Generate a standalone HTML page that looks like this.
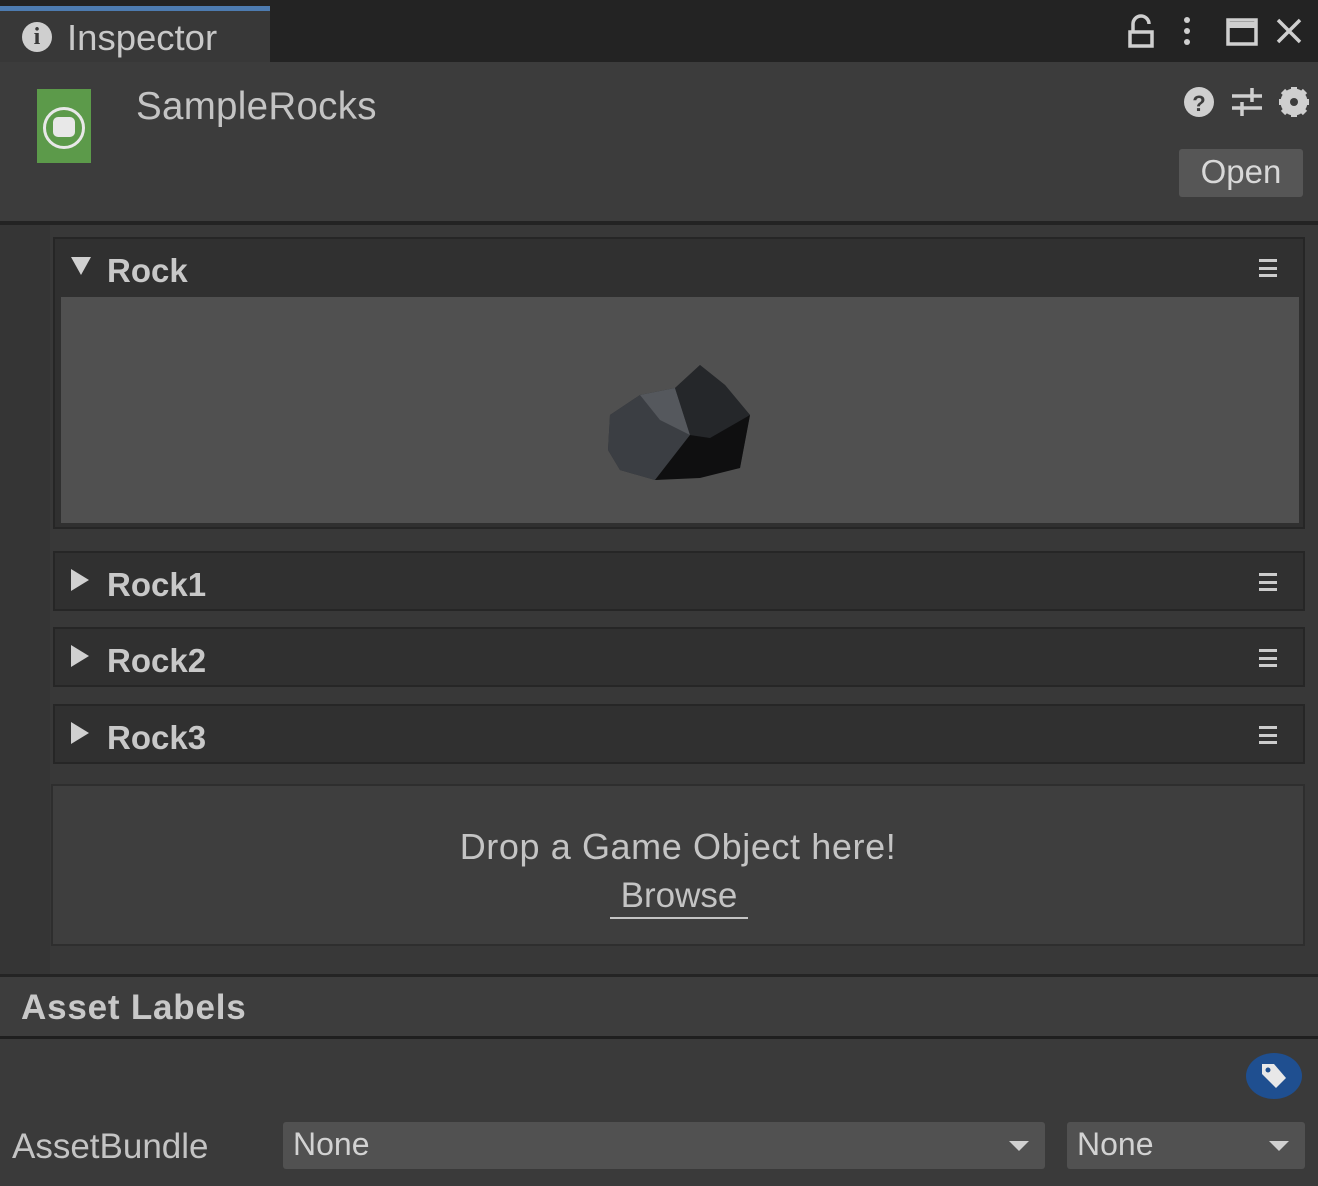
<!DOCTYPE html>
<html><head><meta charset="utf-8"><style>
*{margin:0;padding:0;box-sizing:border-box}
body{width:1318px;height:1186px;background:#383838;font-family:"Liberation Sans",sans-serif;color:#c4c4c4;position:relative;overflow:hidden}
.a{position:absolute}
.hdr{position:absolute;left:53px;width:1252px;height:60px;background:#303030;border:2px solid #262626}
.hdr .t{position:absolute;left:52px;top:13px;font-size:33px;font-weight:bold;color:#c8c8c8}
.tri{position:absolute;left:16px;top:16px;width:0;height:0;border-top:11px solid transparent;border-bottom:11px solid transparent;border-left:18px solid #d0d0d0}
.menu{position:absolute;right:26px;top:20px;width:18px;height:18px;border-top:3px solid #ccc;border-bottom:3px solid #ccc}
.menu:after{content:"";position:absolute;left:0;right:0;top:5px;height:3px;background:#ccc}
.dd{position:absolute;top:1122px;height:47px;background:#515151;border-radius:3px;font-size:32px;color:#d2d2d2;padding:4px 10px}
.dd:after{content:"";position:absolute;right:16px;top:19px;border-left:10px solid transparent;border-right:10px solid transparent;border-top:10px solid #d0d0d0}
</style></head><body>
<div class="a" style="left:0;top:0;width:1318px;height:62px;background:#232323"></div>
<div class="a" style="left:0;top:6px;width:270px;height:57px;background:#383838"></div>
<div class="a" style="left:0;top:6px;width:270px;height:5px;background:#4d7bb0"></div>
<div class="a" style="left:22px;top:22px;width:30px;height:30px;border-radius:50%;background:#cfcfcf;color:#383838;font-weight:bold;font-size:24px;text-align:center;line-height:30px;font-family:'Liberation Serif',serif">i</div>
<div class="a" style="left:67px;top:17px;font-size:36.5px;color:#c8c8c8">Inspector</div>
<svg class="a" style="left:1120px;top:10px" width="190" height="44" viewBox="0 0 190 44">
<g stroke="#cfcfcf" stroke-width="3.5" fill="none">
<rect x="10" y="22" width="22" height="14"/><path d="M13 22 V14 a8 8 0 0 1 16 0"/>
<rect x="108" y="10" width="28" height="24"/><line x1="108" y1="15" x2="136" y2="15" stroke-width="6"/>
<path d="M158 10 L180 32 M180 10 L158 32"/>
</g>
<circle cx="67" cy="10" r="3" fill="#cfcfcf"/><circle cx="67" cy="21" r="3" fill="#cfcfcf"/><circle cx="67" cy="32" r="3" fill="#cfcfcf"/>
</svg>
<div class="a" style="left:0;top:62px;width:1318px;height:160px;background:#3c3c3c"></div>
<div class="a" style="left:0;top:221px;width:1318px;height:4px;background:#232323"></div>
<div class="a" style="left:37px;top:89px;width:54px;height:74px;background:#5c9a4a"></div>
<div class="a" style="left:43px;top:107px;width:42px;height:42px;border-radius:50%;border:3px solid #e8e8e8"></div>
<div class="a" style="left:53px;top:117px;width:22px;height:20px;background:#e8e8e8;border-radius:5px"></div>
<div class="a" style="left:136px;top:85px;font-size:38.5px;color:#c4c4c4;letter-spacing:0.3px">SampleRocks</div>
<svg class="a" style="left:1180px;top:84px" width="132" height="36" viewBox="0 0 132 36">
<circle cx="19" cy="18" r="15" fill="#cfcfcf"/><text x="19" y="27" font-size="22" font-weight="bold" fill="#3c3c3c" text-anchor="middle" font-family="Liberation Sans">?</text>
<g stroke="#cfcfcf" stroke-width="3.5"><path d="M52 12 H82 M52 24 H82 M72 4 V18 M62 18 V32"/></g>
<circle cx="114" cy="18" r="10" fill="none" stroke="#cfcfcf" stroke-width="7"/>
<g stroke="#cfcfcf" stroke-width="6"><path d="M114 3 V33 M99 18 H129 M103 7 L125 29 M125 7 L103 29"/></g>
<circle cx="114" cy="18" r="4" fill="#3c3c3c"/>
</svg>
<div class="a" style="left:1179px;top:149px;width:124px;height:48px;background:#565656;border-radius:3px;font-size:33px;color:#d8d8d8;text-align:center;line-height:46px">Open</div>
<div class="a" style="left:0;top:225px;width:50px;height:750px;background:#353535"></div>
<div class="hdr" style="top:237px;height:292px;background:#303030"><div style="position:absolute;left:16px;top:18px;border-left:10px solid transparent;border-right:10px solid transparent;border-top:18px solid #d0d0d0"></div><div class="t">Rock</div><div class="menu"></div>
<div style="position:absolute;left:6px;top:58px;width:1238px;height:226px;background:#505050"></div></div>
<svg class="a" style="left:600px;top:360px" width="160" height="125" viewBox="0 0 160 125">
<polygon points="10,55 40,35 75,28 100,5 125,25 150,55 140,108 80,118 55,120 20,110 8,90" fill="#2d2f33"/>
<polygon points="10,55 40,35 75,28 90,75 55,120 20,110 8,90" fill="#3b3e43"/>
<polygon points="40,35 75,28 90,75 60,60" fill="#55585d"/>
<polygon points="75,28 100,5 125,25 150,55 110,78 90,75" fill="#25272a"/>
<polygon points="90,75 110,78 150,55 140,108 100,118 55,120" fill="#0f0f10"/>
</svg>
<div class="hdr" style="top:551px"><div class="tri"></div><div class="t">Rock1</div><div class="menu"></div></div>
<div class="hdr" style="top:627px"><div class="tri"></div><div class="t">Rock2</div><div class="menu"></div></div>
<div class="hdr" style="top:704px"><div class="tri"></div><div class="t">Rock3</div><div class="menu"></div></div>
<div class="a" style="left:51px;top:784px;width:1254px;height:162px;background:#3e3e3e;border:2px solid #2e2e2e"></div>
<div class="a" style="left:0;top:826px;width:1356px;text-align:center;font-size:36px;letter-spacing:0.6px;color:#c4c4c4">Drop a Game Object here!</div>
<div class="a" style="left:610px;top:876px;width:138px;text-align:center;font-size:35px;color:#c4c4c4;border-bottom:2px solid #c4c4c4;padding-bottom:1px">Browse</div>
<div class="a" style="left:0;top:974px;width:1318px;height:3px;background:#242424"></div>
<div class="a" style="left:0;top:977px;width:1318px;height:60px;background:#3d3d3d"></div>
<div class="a" style="left:21px;top:988px;font-size:35px;letter-spacing:0.8px;font-weight:bold;color:#c8c8c8">Asset Labels</div>
<div class="a" style="left:0;top:1036px;width:1318px;height:3px;background:#1f1f1f"></div>
<div class="a" style="left:0;top:1039px;width:1318px;height:147px;background:#3a3a3a"></div>
<div class="a" style="left:1246px;top:1053px;width:56px;height:46px;border-radius:50%;background:#1f4f90"></div>
<svg class="a" style="left:1258px;top:1060px" width="32" height="32" viewBox="0 0 32 32"><polygon points="4,4 16,4 28,18 18,28 4,14" fill="#e8e8e8"/><circle cx="10" cy="10" r="2.5" fill="#1f4f90"/></svg>
<div class="a" style="left:12px;top:1127px;font-size:35px;color:#c4c4c4">AssetBundle</div>
<div class="dd" style="left:283px;width:762px">None</div>
<div class="dd" style="left:1067px;width:238px">None</div>
</body></html>
